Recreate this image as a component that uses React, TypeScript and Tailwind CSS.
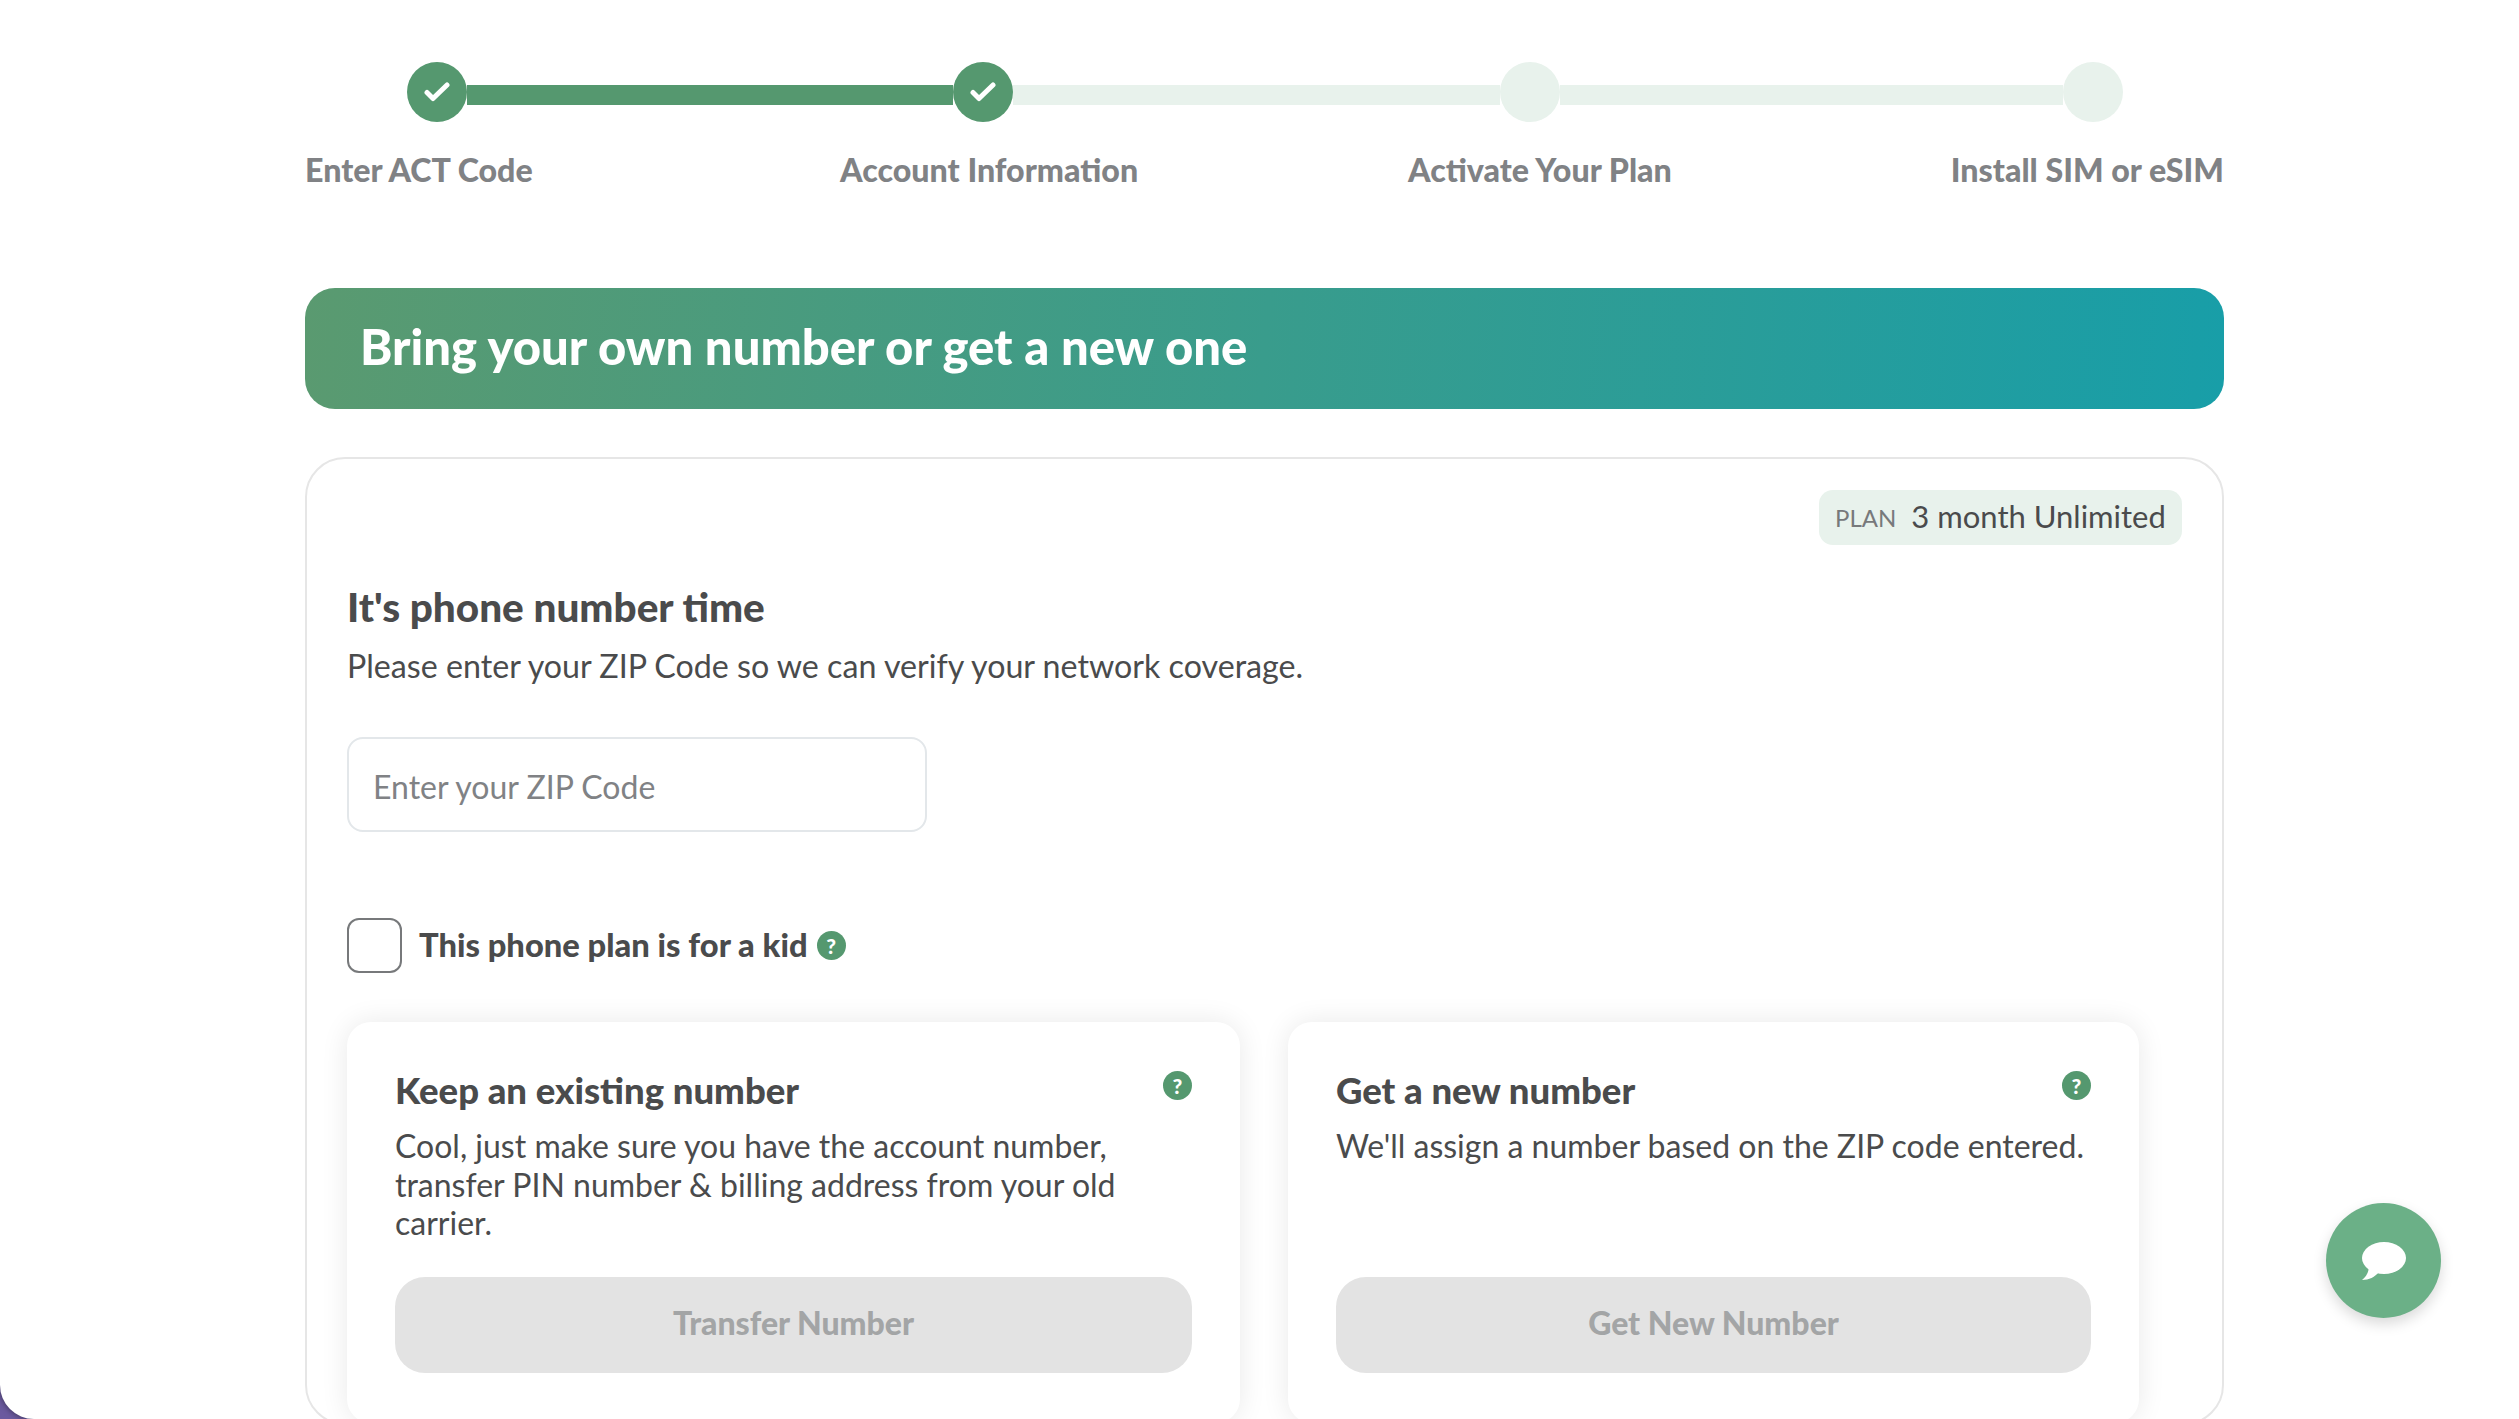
const labels = ['Enter ACT Code', 'Account Information', 'Activate Your Plan', 'Install SIM or eSIM'];

function Check() {
  return (
    <svg width="26" height="20" viewBox="0 0 26 20" fill="none">
      <path d="M3 10.5 9 16.5 23 3" stroke="#fff" strokeWidth="5" strokeLinecap="round" strokeLinejoin="round" />
    </svg>
  );
}

function Help() {
  return (
    <span className="flex h-[29px] w-[29px] shrink-0 items-center justify-center rounded-full bg-[#55986f] text-[21px] leading-none font-black text-white">
      ?
    </span>
  );
}

function ChatBubble() {
  return (
    <svg width="44" height="38" viewBox="0 0 44 38" fill="#fff">
      <ellipse cx="22" cy="16" rx="22" ry="16" />
      <path d="M7 24 C7 30 4 35 0 38 C7 38 13 35 17 30 Z" />
    </svg>
  );
}

function Stepper() {
  return (
    <div className="pt-[62px]">
      <div className="ml-[102px] flex items-start">
        <span className="z-10 flex h-[60px] w-[60px] items-center justify-center rounded-full bg-[#55986f]">
          <Check />
        </span>
        <span className="mt-[23px] h-[20px] w-[486px] bg-[#55986f]" />
        <span className="z-10 flex h-[60px] w-[60px] items-center justify-center rounded-full bg-[#55986f]">
          <Check />
        </span>
        <span className="mt-[23px] h-[20px] w-[487px] bg-[#e8f2ec]" />
        <span className="h-[60px] w-[60px] rounded-full bg-[#e8f2ec]" />
        <span className="mt-[23px] h-[20px] w-[503px] bg-[#e8f2ec]" />
        <span className="h-[60px] w-[60px] rounded-full bg-[#e8f2ec]" />
      </div>
      <div className="mt-[28px] grid grid-cols-[535px_568px_1fr_1fr] text-[32.2px] leading-[40px] font-black text-[#808285]">
        {labels.map((label, i) => (
          <span className={i === 3 ? 'text-right' : ''} key={label}>
            {label}
          </span>
        ))}
      </div>
    </div>
  );
}

function NumberCard({ title, text, action, width }: { title: string; text: string; action: string; width: string }) {
  return (
    <div className={`${width} rounded-[24px] bg-white px-[48px] pt-[46px] pb-[50px] shadow-[0_0_28px_rgba(0,0,0,0.09)]`}>
      <div className="flex items-start justify-between">
        <h3 className="text-[36.5px] leading-[44px] font-black text-[#4a4b4c]">{title}</h3>
        <span className="mt-[3px]">
          <Help />
        </span>
      </div>
      <p className="mt-[15px] h-[116px] text-[32px] leading-[38.5px] text-[#4a4b4c]">{text}</p>
      <button className="mt-[34px] h-[96px] w-full rounded-[30px] bg-[#e3e3e3] pb-[4px] text-[32px] font-black text-[#a3a5a6]">
        {action}
      </button>
    </div>
  );
}

export default function App() {
  return (
    <div className="h-[1419px] overflow-hidden bg-[#6b5a9f] font-['Lato',sans-serif]">
      <div className="relative h-full rounded-bl-[34px] bg-white pl-[305px] shadow-[0_0_6px_rgba(0,0,0,0.5)]">
        <div className="w-[1919px]">
          <Stepper />
          <div className="mt-[98px] flex h-[121px] items-center rounded-[30px] bg-[linear-gradient(95deg,#5a9a70,#189ea8)] pb-[4px] pl-[55px]">
            <h1 className="text-[49px] font-black text-white">Bring your own number or get a new one</h1>
          </div>
          <section className="mt-[48px] rounded-[40px] border-2 border-[#e6e6e6] pt-[31px] pr-[40px] pl-[40px]">
            <div className="flex justify-end">
              <div className="flex h-[55px] w-[363px] items-center gap-[15px] rounded-[14px] bg-[#e8f2ec] pl-[16px]">
                <span className="text-[24px] text-[#77797b]">PLAN</span>
                <span className="pb-[2px] text-[31px] text-[#4a4b4c]">3 month Unlimited</span>
              </div>
            </div>
            <h2 className="mt-[38px] text-[40.5px] leading-[48px] font-black text-[#4a4b4c]">It's phone number time</h2>
            <p className="mt-[13px] text-[32.2px] leading-[44px] text-[#4a4b4c]">
              Please enter your ZIP Code so we can verify your network coverage.
            </p>
            <input
              className="mt-[49px] block h-[95px] w-[580px] rounded-[16px] border-2 border-[#e3e7ea] px-[24px] pt-[4px] text-[32px] placeholder:text-[#808285]"
              placeholder="Enter your ZIP Code"
            />
            <label className="mt-[86px] flex h-[55px] items-center">
              <input
                className="h-[55px] w-[55px] appearance-none rounded-[12px] border-2 border-[#77797b]"
                type="checkbox"
              />
              <span className="mr-[9px] ml-[17px] pb-[2px] text-[32.7px] font-black text-[#4a4b4c]">
                This phone plan is for a kid
              </span>
              <Help />
            </label>
            <div className="mt-[49px] flex gap-[48px]">
              <NumberCard
                action="Transfer Number"
                text="Cool, just make sure you have the account number, transfer PIN number & billing address from your old carrier."
                title="Keep an existing number"
                width="w-[893px]"
              />
              <NumberCard
                action="Get New Number"
                text="We'll assign a number based on the ZIP code entered."
                title="Get a new number"
                width="w-[851px]"
              />
            </div>
          </section>
        </div>
        <button className="absolute top-[1203px] left-[2326px] flex h-[115px] w-[115px] items-center justify-center rounded-full bg-[#6bb087] shadow-[0_6px_14px_rgba(0,0,0,0.15)]">
          <ChatBubble />
        </button>
      </div>
    </div>
  );
}
